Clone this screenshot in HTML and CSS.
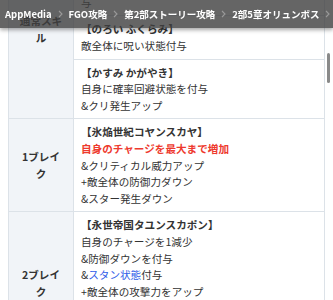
FILE: index.html
```html
<!DOCTYPE html>
<html lang="ja">
<head>
    <meta charset="UTF-8">
    <meta name="viewport" content="width=device-width, initial-scale=1.0">
    <title>2部5章オリュンボス攻略</title>
    <link rel="stylesheet" href="styles.css">
</head>
<body>

    <!-- Breadcrumb bar -->
    <nav class="crumbs">
        <span>AppMedia</span>
        <svg class="sep" viewBox="0 0 5 8"><path d="M1 1l3 3-3 3"/></svg>
        <span>FGO攻略</span>
        <svg class="sep" viewBox="0 0 5 8"><path d="M1 1l3 3-3 3"/></svg>
        <span>第2部ストーリー攻略</span>
        <svg class="sep" viewBox="0 0 5 8"><path d="M1 1l3 3-3 3"/></svg>
        <span>2部5章オリュンボス</span>
        <svg class="sep" viewBox="0 0 5 8"><path d="M1 1l3 3-3 3"/></svg>
    </nav>

    <div class="page">
        <table class="skills">
            <tr>
                <th rowspan="3">通常スキル</th>
                <td>
                    <b>【ゆうわく ほほえみ】</b><br>
                    味方全体の攻撃力アップ<br>
                    敵全体に毎ターン確率でスキル封印状態と呪い付<br>
                    与
                </td>
            </tr>
            <tr>
                <td>
                    <b>【のろい ふくらみ】</b><br>
                    敵全体に呪い状態付与
                </td>
            </tr>
            <tr>
                <td>
                    <b>【かすみ かがやき】</b><br>
                    自身に確率回避状態を付与<br>
                    &amp;クリ発生アップ
                </td>
            </tr>
            <tr>
                <th>1ブレイク</th>
                <td>
                    <b>【氷焔世紀コヤンスカヤ】</b><br>
                    <span class="red">自身のチャージを最大まで増加</span><br>
                    &amp;クリティカル威力アップ<br>
                    +敵全体の防御力ダウン<br>
                    &amp;スター発生ダウン
                </td>
            </tr>
            <tr>
                <th>2ブレイク</th>
                <td>
                    <b>【永世帝国タユンスカポン】</b><br>
                    自身のチャージを1減少<br>
                    &amp;防御ダウンを付与<br>
                    &amp;<span class="blue">スタン状態</span>付与<br>
                    +敵全体の攻撃力をアップ<br>
                    &amp;クリティカル発生率アップ<br>
                    +自身の弱体状態を解除<br>
                    &amp;HPを回復
                </td>
            </tr>
        </table>
    </div>

    <div class="thumb"></div>

</body>
</html>
```

FILE: styles.css
```css
body {
    margin: 0;
    background: #fff;
    color: #333;
    font-family: "Noto Sans CJK JP", "Noto Sans", sans-serif;
}

/* breadcrumb bar laid over the content */
.crumbs {
    position: fixed;
    top: 0;
    left: 0;
    right: 0;
    height: 28px;
    padding-left: 5px;
    display: flex;
    align-items: center;
    gap: 6px;
    white-space: nowrap;
    overflow: hidden;
    background: rgba(62, 62, 62, 0.8);
    box-shadow: 0 2px 4px rgba(0, 0, 0, 0.35);
    color: #fff;
    font-size: 9.5px;
    font-weight: bold;
    z-index: 2;
}
.sep {
    width: 5px;
    height: 8px;
    flex: none;
    fill: none;
    stroke: #9a9a9a;
    stroke-width: 1.1;
}

/* content is scrolled a little down the article */
.page {
    margin: -61px 8px 0 8px;
}
.skills {
    width: 100%;
    border-collapse: collapse;
    table-layout: fixed;
    font-size: 10.6px;
    line-height: 16.6px;
}
.skills th,
.skills td {
    border: 1px solid #dce2e8;
}
.skills th {
    width: 46px;
    padding: 5px 9px 4px;
    background: #f1f4f8;
    font-weight: bold;
    text-align: center;
    vertical-align: middle;
}
.skills td {
    padding: 5px 7px 4px;
    text-align: left;
}
.skills b {
    font-weight: bold;
}
.red {
    color: #ee3a2e;
    font-weight: bold;
}
.blue {
    color: #2f5ce8;
}

/* mobile style overlay scrollbar */
.thumb {
    position: fixed;
    top: 53px;
    right: 3px;
    width: 3px;
    height: 30px;
    border-radius: 2px;
    background: #8a8a8a;
}
```
